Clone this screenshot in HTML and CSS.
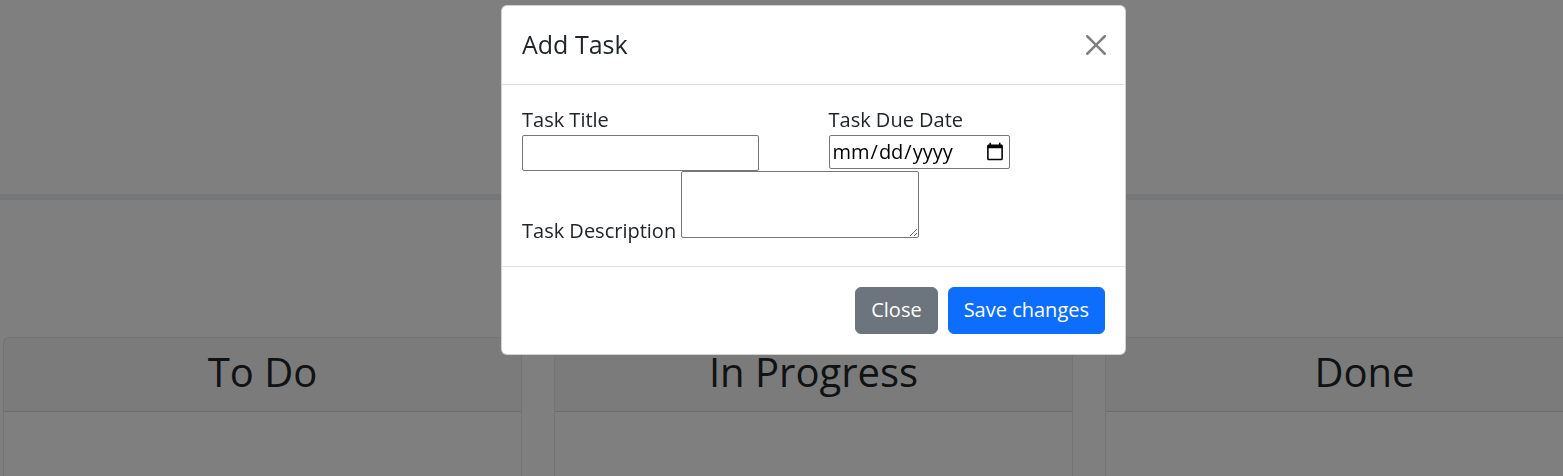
FILE: index.html
```html
<!DOCTYPE html>
<html lang="en">
<head>
<meta charset="utf-8">
<title>Task Board</title>
<link rel="stylesheet" href="styles.css">
</head>
<body>
  <header class="hero"></header>
  <main class="board">
    <section class="card"><div class="card-header"><h2>To Do</h2></div><div class="card-body"></div></section>
    <section class="card"><div class="card-header"><h2>In Progress</h2></div><div class="card-body"></div></section>
    <section class="card"><div class="card-header"><h2>Done</h2></div><div class="card-body"></div></section>
  </main>

  <div class="backdrop"></div>

  <div class="modal">
    <div class="modal-header">
      <h5 class="modal-title">Add Task</h5>
      <button class="btn-close" type="button" aria-label="Close">
        <svg viewBox="0 0 16 16" width="20" height="20"><path d="M.293.293a1 1 0 0 1 1.414 0L8 6.586 14.293.293a1 1 0 1 1 1.414 1.414L9.414 8l6.293 6.293a1 1 0 0 1-1.414 1.414L8 9.414l-6.293 6.293a1 1 0 0 1-1.414-1.414L6.586 8 .293 1.707a1 1 0 0 1 0-1.414z"/></svg>
      </button>
    </div>
    <div class="modal-body">
      <div class="row">
        <div class="col">
          <label class="label" for="title">Task Title</label>
          <input class="text-input" id="title" type="text">
        </div>
        <div class="col">
          <label class="label" for="due">Task Due Date</label>
          <input class="date-input" id="due" type="date">
        </div>
      </div>
      <div class="desc-line"><label for="desc">Task Description</label> <textarea class="textarea" id="desc"></textarea></div>
    </div>
    <div class="modal-footer">
      <button class="btn btn-secondary" type="button">Close</button>
      <button class="btn btn-primary" type="button">Save changes</button>
    </div>
  </div>
</body>
</html>
```

FILE: styles.css
```css
* { box-sizing: border-box; }
html { font-size: 20px; }
body {
  margin: 0;
  font-family: "Open Sans", "Noto Sans", sans-serif;
  font-size: 20px;
  line-height: 1.5;
  color: #212529;
  background: #fff;
  overflow: hidden;
  height: 476px;
  display: flex;
  flex-direction: column;
}
.hero {
  flex: 0 0 200px;
  border-bottom: 6px solid #e9ecef;
}
.board {
  flex: 1;
  min-height: 0;
  display: flex;
  gap: 32px;
  padding: 137px 0 0 3px;
}
.card {
  flex: 0 0 519px;
  border: 1px solid rgba(0,0,0,.09);
  border-bottom: 0;
  border-radius: 6px 6px 0 0;
}
.card-header {
  background: rgba(0,0,0,.03);
  border-bottom: 1px solid rgba(0,0,0,.125);
  padding: 10px 20px 15px;
  text-align: center;
}
.card-header h2 {
  margin: 0;
  font-size: 40px;
  font-weight: 400;
  line-height: 1.2;
}
.backdrop {
  position: fixed;
  inset: 0;
  background: rgba(0,0,0,.5);
}
.modal {
  position: absolute;
  left: 501px;
  top: 5px;
  width: 625px;
  background: #fff;
  border: 1px solid rgba(0,0,0,.175);
  border-radius: 6px;
}
.modal-header {
  display: flex;
  align-items: center;
  padding: 20px;
  border-bottom: 1px solid #dee2e6;
}
.modal-title {
  margin: 0;
  font-size: 25px;
  font-weight: 400;
  line-height: 1.5;
}
.btn-close {
  margin-left: auto;
  margin-right: -1px;
  padding: 0;
  border: 0;
  background: transparent;
  width: 20px;
  height: 20px;
  display: flex;
  opacity: .5;
}
.btn-close svg { fill: #000; }
.modal-body { padding: 20px; }
.row {
  display: grid;
  grid-template-columns: 1fr 1fr;
  column-gap: 30px;
}
.label { display: block; }
.text-input, .date-input, .textarea {
  font: inherit;
  color: #000;
  border: 1px solid #767676;
  border-radius: 2px;
  background: #fff;
}
.text-input {
  width: 237px;
  height: 36px;
  padding: 1px 2px;
}
.date-input {
  width: 181px;
  height: 34px;
  padding: 0 2px;
}
.textarea {
  width: 238px;
  height: 67px;
  padding: 2px;
  resize: both;
  vertical-align: baseline;
}
.modal-footer {
  display: flex;
  justify-content: flex-end;
  gap: 10px;
  padding: 20px;
  border-top: 1px solid #dee2e6;
}
.btn {
  font: inherit;
  line-height: 1.5;
  padding: 7.5px 15px;
  border: 1px solid transparent;
  border-radius: 6px;
  color: #fff;
}
.btn-secondary { background: #6c757d; border-color: #6c757d; }
.btn-primary { background: #0d6efd; border-color: #0d6efd; }
```
